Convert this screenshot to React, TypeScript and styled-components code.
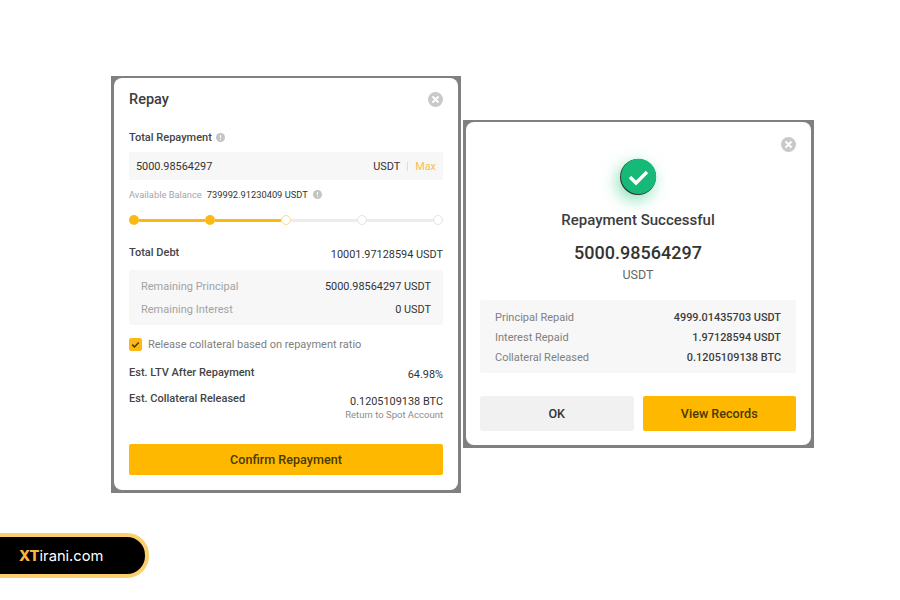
import React from "react";
import styled, { createGlobalStyle } from "styled-components";

const Global = createGlobalStyle`
  html, body { margin: 0; padding: 0; background: #fff; }
  body { font-family: Roboto, "Liberation Sans", sans-serif; color: #333; }
`;
const Page = styled.div`
  width: 900px; height: 600px; overflow: hidden; display: flex; flex-direction: column; background: #fff;
`;
const Dialogs = styled.div`
  display: flex; align-items: flex-start; gap: 2px; margin: 76px 0 0 111px; height: 417px;
`;
const Frame = styled.div<{ $w: number; $h: number; $top?: number }>`
  width: ${p => p.$w}px; height: ${p => p.$h}px; margin-top: ${p => p.$top ?? 0}px;
  box-sizing: border-box; background: #808080; padding: 2px 3px 3px 3px; flex: none;
`;
const Card = styled.div<{ $pad: string }>`
  position: relative; box-sizing: border-box; height: 100%; background: #fff; border-radius: 8px;
  padding: ${p => p.$pad}; display: flex; flex-direction: column;
`;
const TitleRow = styled.div`
  display: flex; justify-content: space-between; align-items: center; height: 20px;
`;
const Title = styled.div`
  font-size: 14.5px; font-weight: 500; color: #3d3d3d; margin-top: 1px;
`;
const Close = styled.svg<{ $abs?: boolean }>`
  width: 15px; height: 15px; flex: none;
  ${p => p.$abs ? "position: absolute; right: 15px; top: 15px;" : ""}
`;
const CloseIcon = ({ abs }: { abs?: boolean }) => (
  <Close viewBox="0 0 15 15" $abs={abs}>
    <circle cx="7.5" cy="7.5" r="7.5" fill="#c9c9c9" />
    <path d="M5 5l5 5M10 5l-5 5" stroke="#fff" strokeWidth="1.9" strokeLinecap="round" />
  </Close>
);
const Label = styled.div<{ $top?: number }>`
  display: flex; align-items: center; gap: 4px; font-size: 11px; font-weight: 500; color: #444;
  margin-top: ${p => p.$top ?? 0}px;
`;
const InfoSvg = styled.svg`
  width: 9px; height: 9px; flex: none;
`;
const Info = () => (
  <InfoSvg viewBox="0 0 9 9">
    <circle cx="4.5" cy="4.5" r="4.5" fill="#c4c4c4" />
    <path d="M4.5 2v3" stroke="#fff" strokeWidth="1.1" />
    <circle cx="4.5" cy="6.6" r=".7" fill="#fff" />
  </InfoSvg>
);
const InputBox = styled.div`
  margin-top: 8px; height: 28px; box-sizing: border-box; background: #f7f7f7; padding: 0 7px;
  display: flex; align-items: center; justify-content: space-between; font-size: 10.9px; color: #333;
`;
const InputEnd = styled.div`
  display: flex; align-items: center; gap: 7px;
`;
const Sep = styled.span`
  width: 1px; height: 9px; background: #ddd;
`;
const Max = styled.span`
  color: #f5c04f;
`;
const Balance = styled.div`
  display: flex; align-items: center; gap: 5px; margin-top: 9px; font-size: 9.3px; color: #333;
`;
const Muted = styled.span`
  color: #a6a6a6;
`;
const Slider = styled.div`
  margin-top: 15px; height: 10px; display: flex; align-items: center;
`;
const Dot = styled.span<{ $state: "on" | "cur" | "off" }>`
  width: 10px; height: 10px; box-sizing: border-box; border-radius: 50%; flex: none;
  background: ${p => p.$state === "on" ? "#fdb913" : "#fff"};
  border: ${p => p.$state === "cur" ? "1.5px solid #fbdc8c" : p.$state === "off" ? "1.5px solid #e3e3e3" : "none"};
`;
const Track = styled.span<{ $on?: boolean }>`
  flex: 1; height: 3px; background: ${p => p.$on ? "#fdb913" : "#ececec"};
`;
const Row = styled.div<{ $top?: number; $align?: string }>`
  display: flex; justify-content: space-between; align-items: ${p => p.$align ?? "center"};
  margin-top: ${p => p.$top ?? 0}px;
`;
const RowLabel = styled.div`
  font-size: 11px; font-weight: 500; color: #444;
`;
const RowValue = styled.div<{ $drop?: number }>`
  font-size: 10.9px; color: #333; text-align: right; padding-top: ${p => p.$drop ?? 0}px;
`;
const SubValue = styled.div`
  font-size: 9.5px; color: #8c8c8c; margin-top: 1px;
`;
const Panel = styled.div<{ $gap: number; $top: number; $h: number; $px: number; $pt?: number }>`
  margin-top: ${p => p.$top}px; height: ${p => p.$h}px; box-sizing: border-box; background: #f7f7f7; flex: none;
  padding: ${p => p.$pt ?? 0}px ${p => p.$px}px 0; border-radius: 2px;
  display: flex; flex-direction: column; justify-content: center; gap: ${p => p.$gap}px;
`;
const PanelRow = styled.div`
  display: flex; justify-content: space-between; align-items: center; height: 14px;
`;
const PanelLabel = styled.span<{ $soft?: boolean }>`
  font-size: 11px; color: ${p => p.$soft ? "#a3a3a3" : "#808080"};
`;
const PanelValue = styled.span<{ $bold?: boolean }>`
  font-size: 10.9px; color: ${p => p.$bold ? "#3d3d3d" : "#333"}; font-weight: ${p => p.$bold ? 500 : 400};
`;
const CheckLine = styled.div`
  display: flex; align-items: center; gap: 6px; margin-top: 13px; font-size: 11px; color: #7f7f7f; height: 13px;
`;
const CheckBox = styled.svg`
  width: 13px; height: 13px; flex: none;
`;
const PrimaryButton = styled.div<{ $h: number }>`
  height: ${p => p.$h}px; background: #ffb800; border-radius: 2px; color: #4a3a00; font-size: 12.6px; font-weight: 500;
  display: flex; align-items: center; justify-content: center; flex: 1;
`;
const Spacer = styled.div`
  flex: 1;
`;
const SuccessWrap = styled.div`
  align-self: center; margin-top: 36px; width: 38px; height: 38px; flex: none;
`;
const SuccessSvg = styled.svg`
  width: 38px; height: 38px; overflow: visible; display: block;
  filter: drop-shadow(-3px 5px 8px rgba(40, 200, 130, .55));
`;
const SuccessTitle = styled.div`
  text-align: center; margin-top: 15px; font-size: 15px; font-weight: 500; color: #3d3d3d;
`;
const Amount = styled.div`
  text-align: center; margin-top: 12px; font-size: 18px; font-weight: 500; color: #333; line-height: 24px;
`;
const Unit = styled.div`
  text-align: center; font-size: 12.5px; color: #666; line-height: 17px; margin-top: 1px;
`;
const Buttons = styled.div`
  display: flex; gap: 9px; margin-top: 23px; flex: none;
`;
const GreyButton = styled.div`
  flex: 1; height: 35px; background: #f1f1f1; border-radius: 3px; font-size: 12.6px; font-weight: 500; color: #333;
  display: flex; align-items: center; justify-content: center;
`;
const Badge = styled.div`
  margin: 40px 0 0 -24px; width: 173px; height: 45px; box-sizing: border-box; flex: none;
  border: 4px solid #fbcf6c; background: #000;
  border-radius: 22px; display: flex; align-items: center; padding-left: 39px;
  font-family: Inter, "Liberation Sans", sans-serif; font-size: 14.7px; color: #fff;
`;
const BadgeAccent = styled.span`
  color: #f7b740; font-weight: 800;
`;

export default function App() {
  return (
    <Page>
      <Global />
      <Dialogs>
        <Frame $w={350} $h={417}>
          <Card $pad="11px 15px 15px">
            <TitleRow><Title>Repay</Title><CloseIcon /></TitleRow>
            <Label $top={22}>Total Repayment <Info /></Label>
            <InputBox>
              <span>5000.98564297</span>
              <InputEnd><span>USDT</span><Sep /><Max>Max</Max></InputEnd>
            </InputBox>
            <Balance><Muted>Available Balance</Muted><span>739992.91230409 USDT</span><Info /></Balance>
            <Slider>
              <Dot $state="on" /><Track $on /><Dot $state="on" /><Track $on /><Dot $state="cur" /><Track /><Dot $state="off" /><Track /><Dot $state="off" />
            </Slider>
            <Row $top={21} $align="flex-start"><RowLabel>Total Debt</RowLabel><RowValue $drop={2}>10001.97128594 USDT</RowValue></Row>
            <Panel $top={9} $h={55} $gap={9} $px={12}>
              <PanelRow><PanelLabel $soft>Remaining Principal</PanelLabel><PanelValue>5000.98564297 USDT</PanelValue></PanelRow>
              <PanelRow><PanelLabel $soft>Remaining Interest</PanelLabel><PanelValue>0 USDT</PanelValue></PanelRow>
            </Panel>
            <CheckLine>
              <CheckBox viewBox="0 0 13 13">
                <rect width="13" height="13" rx="2" fill="#fdb913" />
                <path d="M3.2 6.6l2.3 2.3 4.2-4.4" fill="none" stroke="#4a3500" strokeWidth="1.5" />
              </CheckBox>
              Release collateral based on repayment ratio
            </CheckLine>
            <Row $top={15} $align="flex-start"><RowLabel>Est. LTV After Repayment</RowLabel><RowValue $drop={2}>64.98%</RowValue></Row>
            <Row $top={11} $align="flex-start">
              <RowLabel>Est. Collateral Released</RowLabel>
              <RowValue $drop={3}>0.1205109138 BTC<SubValue>Return to Spot Account</SubValue></RowValue>
            </Row>
            <Spacer />
            <Row><PrimaryButton $h={31}>Confirm Repayment</PrimaryButton></Row>
          </Card>
        </Frame>
        <Frame $w={351} $h={328} $top={44}>
          <Card $pad="0 15px 13px 14px">
            <CloseIcon abs />
            <SuccessWrap>
              <SuccessSvg viewBox="0 0 38 38">
                <circle cx="19" cy="19" r="18" fill="#333" />
                <circle cx="19.6" cy="18.4" r="17.6" fill="#17b978" />
                <path d="M11 19l6 6 11-11" fill="none" stroke="#fff" strokeWidth="3.4" />
              </SuccessSvg>
            </SuccessWrap>
            <SuccessTitle>Repayment Successful</SuccessTitle>
            <Amount>5000.98564297</Amount>
            <Unit>USDT</Unit>
            <Panel $top={17} $h={73} $gap={6} $px={15} $pt={2}>
              <PanelRow><PanelLabel>Principal Repaid</PanelLabel><PanelValue $bold>4999.01435703 USDT</PanelValue></PanelRow>
              <PanelRow><PanelLabel>Interest Repaid</PanelLabel><PanelValue $bold>1.97128594 USDT</PanelValue></PanelRow>
              <PanelRow><PanelLabel>Collateral Released</PanelLabel><PanelValue $bold>0.1205109138 BTC</PanelValue></PanelRow>
            </Panel>
            <Buttons>
              <GreyButton>OK</GreyButton>
              <PrimaryButton $h={35}>View Records</PrimaryButton>
            </Buttons>
          </Card>
        </Frame>
      </Dialogs>
      <Badge><BadgeAccent>XT</BadgeAccent>irani.com</Badge>
    </Page>
  );
}
